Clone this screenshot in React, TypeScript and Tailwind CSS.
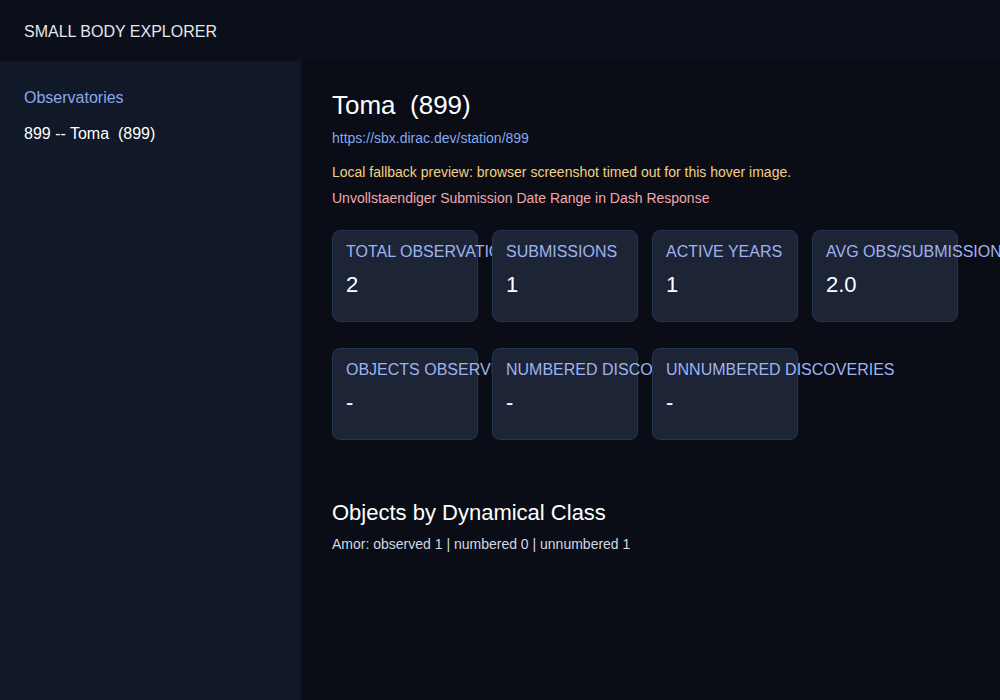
const stats1 = [
  { label: "Total Observations", value: "2" },
  { label: "Submissions", value: "1" },
  { label: "Active Years", value: "1" },
  { label: "Avg Obs/Submission", value: "2.0" },
];

const stats2 = [
  { label: "Objects Observed", value: "-" },
  { label: "Numbered Discoveries", value: "-" },
  { label: "Unnumbered Discoveries", value: "-" },
];

const StatCard = ({ label, value }: { label: string; value: string }) => (
  <div className="w-[146px] h-[92px] shrink-0 rounded-lg bg-[#1c2436] border border-[#243554] px-[13px] pt-[11px]">
    <div className="text-base leading-[20px] uppercase text-[#9fb3f0] whitespace-nowrap">{label}</div>
    <div className="mt-[10px] text-[22px] leading-[26px] text-white">{value}</div>
  </div>
);

const App = () => {
  return (
    <div className="w-full h-[700px] flex flex-col bg-[#0a0d15] text-white font-['Liberation_Sans'] overflow-hidden">
      <header className="h-[61px] shrink-0 bg-[#0b0f1a] flex items-center px-6 pt-[2px]">
        <span className="text-base text-[#e5e7eb] whitespace-pre">SMALL BODY EXPLORER</span>
      </header>
      <div className="flex flex-1 min-h-0">
        <aside className="w-[301px] shrink-0 bg-[#111827] px-6 pt-[25px] flex flex-col gap-3">
          <div className="text-base leading-6 text-[#8ba8f0]">Observatories</div>
          <div className="text-base leading-6 text-white whitespace-pre">899 -- Toma  (899)</div>
        </aside>
        <main className="flex-1 min-w-0 pl-[31px] pt-[28px]">
          <h1 className="text-[26px] leading-8 whitespace-pre">Toma  (899)</h1>
          <div className="mt-[7px] text-sm leading-5 text-[#86a7ee]">https://sbx.dirac.dev/station/899</div>
          <div className="mt-[14px] text-sm leading-5 text-[#f6cf83]">
            Local fallback preview: browser screenshot timed out for this hover image.
          </div>
          <div className="mt-[6px] text-sm leading-5 text-[#f2a7b0]">
            Unvollstaendiger Submission Date Range in Dash Response
          </div>
          <div className="mt-[22px] flex gap-[14px]">
            {stats1.map((s) => (
              <StatCard key={s.label} {...s} />
            ))}
          </div>
          <div className="mt-[26px] flex gap-[14px]">
            {stats2.map((s) => (
              <StatCard key={s.label} {...s} />
            ))}
          </div>
          <h2 className="mt-[59px] text-[22px] leading-7">Objects by Dynamical Class</h2>
          <div className="mt-[7px] text-sm leading-5 text-[#d1d9e6]">
            Amor: observed 1 | numbered 0 | unnumbered 1
          </div>
        </main>
      </div>
    </div>
  );
};

export default App;
